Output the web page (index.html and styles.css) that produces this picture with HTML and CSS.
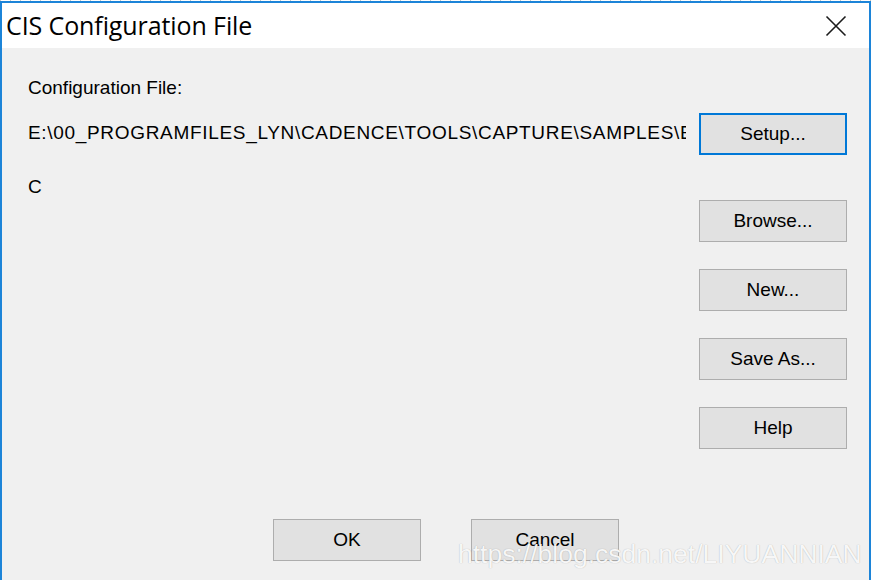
FILE: index.html
```html
<!DOCTYPE html>
<html>
<head>
<meta charset="utf-8">
<link rel="stylesheet" href="styles.css">
</head>
<body>
<div class="window">
  <div class="titlebar">
    <span class="title">CIS Configuration File</span>
    <svg class="close" width="22" height="22" viewBox="0 0 22 22">
      <path d="M1.5 1.5 L20.5 20.5 M20.5 1.5 L1.5 20.5" stroke="#1b1b1b" stroke-width="1.6" fill="none"/>
    </svg>
  </div>
  <div class="client">
    <div class="content">
      <div class="left">
        <div class="line label">Configuration File:</div>
        <div class="line path">E:\00_PROGRAMFILES_LYN\CADENCE\TOOLS\CAPTURE\SAMPLES\E</div>
        <div class="line drive">C</div>
      </div>
      <div class="right">
        <button class="btn default">Setup...</button>
        <button class="btn browse">Browse...</button>
        <button class="btn">New...</button>
        <button class="btn">Save As...</button>
        <button class="btn">Help</button>
      </div>
    </div>
    <div class="footer">
      <button class="btn">OK</button>
      <button class="btn">Cancel</button>
    </div>
  </div>
</div>
<div class="watermark">https://blog.csdn.net/LIYUANNIAN</div>
</body>
</html>
```

FILE: styles.css
```css
html, body {
  margin: 0;
  padding: 0;
  height: 100%;
  overflow: hidden;
}
body {
  background-color: #ffffff;
  background-image: repeating-linear-gradient(to right, #c8c8c8 0 1px, transparent 1px 10px);
  background-size: 100% 1px;
  background-repeat: no-repeat;
  position: relative;
}
.window {
  margin-top: 1px;
  width: 871px;
  height: 579px;
  box-sizing: border-box;
  border: 2px solid #1c84d8;
  border-bottom: none;
  display: flex;
  flex-direction: column;
  overflow: hidden;
}
.titlebar {
  height: 45px;
  flex: none;
  background: #ffffff;
  display: flex;
  align-items: flex-start;
  justify-content: space-between;
}
.title {
  font-family: "Open Sans", "Noto Sans", sans-serif;
  font-size: 25px;
  line-height: 30px;
  margin-top: 7px;
  margin-left: 4px;
  color: #000;
  letter-spacing: -0.1px;
}
.close {
  margin-top: 12px;
  margin-right: 22px;
}
.client {
  flex: 1;
  background: #f0f0f0;
  font-family: "Liberation Sans", Arial, sans-serif;
  font-size: 19px;
  color: #000;
}
.content {
  display: grid;
  grid-template-columns: 658px 148px;
  column-gap: 13px;
  padding-left: 26px;
}
.left {
  padding-top: 29px;
  min-width: 0;
}
.line {
  line-height: 22px;
  white-space: nowrap;
  overflow: hidden;
}
.path {
  margin-top: 23px;
  letter-spacing: 0.68px;
}
.drive {
  margin-top: 32px;
}
.right {
  padding-top: 65px;
  display: flex;
  flex-direction: column;
  gap: 27px;
}
.btn {
  width: 148px;
  height: 42px;
  box-sizing: border-box;
  background: #e1e1e1;
  border: 1px solid #adadad;
  font-family: "Liberation Sans", Arial, sans-serif;
  font-size: 19px;
  color: #000;
  padding: 0;
  margin: 0;
}
.btn.default {
  border: 2px solid #0078d7;
}
.btn.browse {
  margin-top: 18px;
}
.footer {
  display: flex;
  gap: 50px;
  padding-left: 271px;
  margin-top: 70px;
}
.watermark {
  position: absolute;
  left: 458px;
  top: 541px;
  font-family: "Liberation Sans", Arial, sans-serif;
  font-size: 26.5px;
  line-height: 27px;
  color: rgba(255, 255, 255, 0.92);
  text-shadow: 0 0 1px rgba(0, 0, 0, 0.3);
  white-space: nowrap;
}
```
